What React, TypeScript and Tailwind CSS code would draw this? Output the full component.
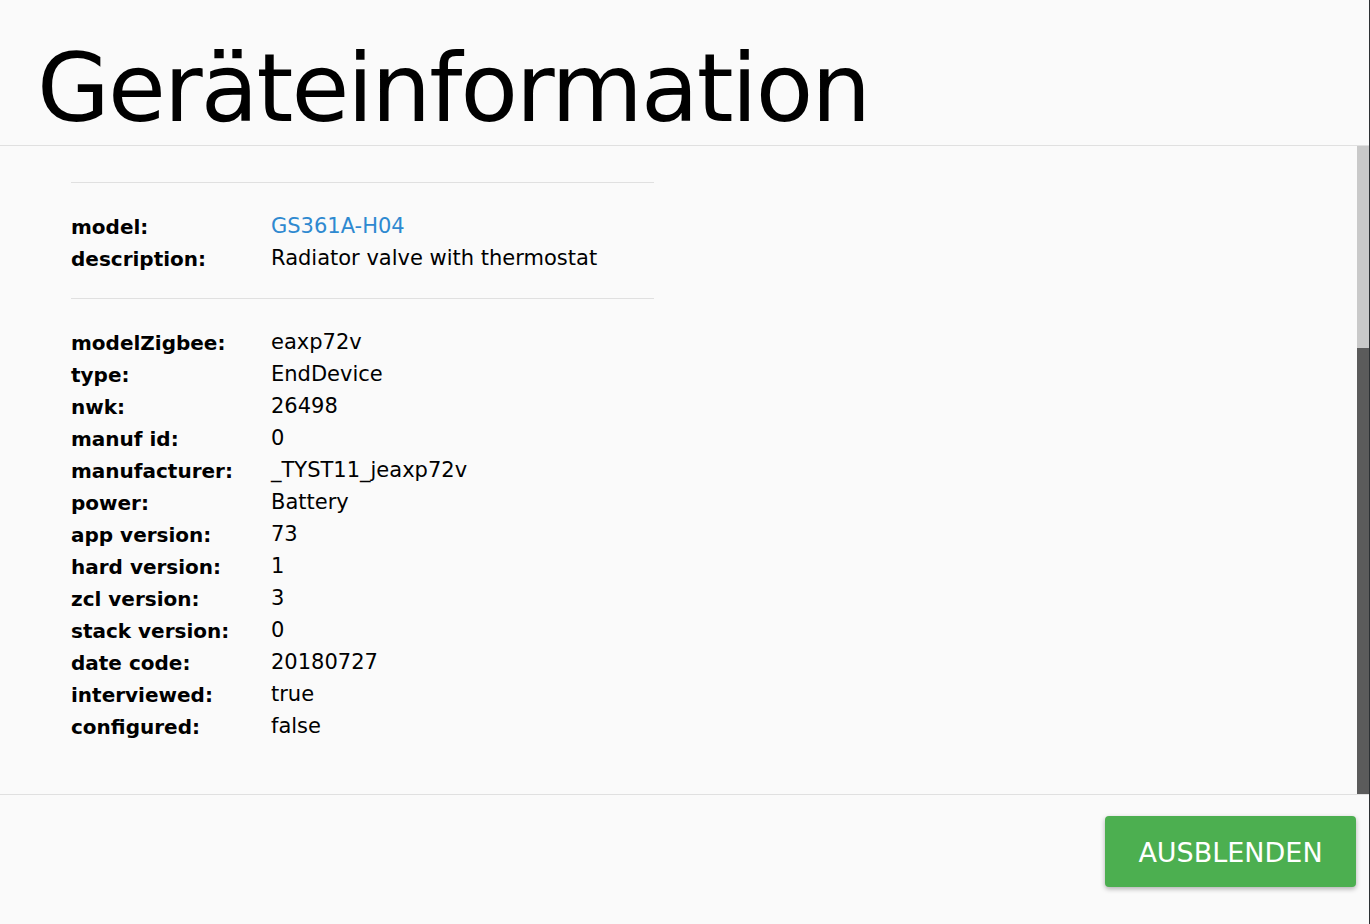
const rows: [string, string][] = [
  ["modelZigbee:", "eaxp72v"],
  ["type:", "EndDevice"],
  ["nwk:", "26498"],
  ["manuf id:", "0"],
  ["manufacturer:", "_TYST11_jeaxp72v"],
  ["power:", "Battery"],
  ["app version:", "73"],
  ["hard version:", "1"],
  ["zcl version:", "3"],
  ["stack version:", "0"],
  ["date code:", "20180727"],
  ["interviewed:", "true"],
  ["configured:", "false"],
];

function Row({ label, children }: { label: string; children: React.ReactNode }) {
  return (
    <div className="flex h-[32px] items-center">
      <span className="w-[200px] font-bold text-[20px] text-black">{label}</span>
      <span className="text-[21px] text-black">{children}</span>
    </div>
  );
}

export default function App() {
  return (
    <div
      className="flex flex-col w-[1370px] h-[924px] bg-[#fafafa] border-r border-[#2c3033] overflow-hidden"
      style={{ fontFamily: '"DejaVu Sans", "Liberation Sans", sans-serif' }}
    >
      {/* Title */}
      <div className="h-[146px] shrink-0 border-b border-[#e0e0e0] pl-[37px] pt-[42px]">
        <h1 className="text-[94px] leading-none tracking-[-0.02em] font-normal text-black">Geräteinformation</h1>
      </div>

      {/* Scrollable body */}
      <div className="flex h-[648px] shrink-0">
        <div className="flex-1 pl-[71px] pt-[36px]">
          <div className="w-[583px]">
            <div className="border-t border-[#e0e0e0] pt-[28px] pb-[23px]">
              <Row label="model:">
                <span className="text-[#2e89d0]">GS361A-H04</span>
              </Row>
              <Row label="description:">Radiator valve with thermostat</Row>
            </div>
            <div className="border-t border-[#e0e0e0] pt-[28px]">
              {rows.map(([k, v]) => (
                <Row key={k} label={k}>
                  {v}
                </Row>
              ))}
            </div>
          </div>
        </div>
        {/* scrollbar */}
        <div className="w-[12px] flex flex-col">
          <div className="h-[202px] bg-[#c9c9c9]" />
          <div className="flex-1 bg-[#5b5b5b]" />
        </div>
      </div>

      {/* Footer */}
      <div className="flex-1 border-t border-[#e0e0e0] flex justify-end items-start pt-[21px] pr-[13px]">
        <button className="h-[71px] w-[251px] pt-[3px] rounded-[4px] bg-[#4caf50] text-white text-[27px] shadow-[0_2px_5px_rgba(0,0,0,0.3)]">
          AUSBLENDEN
        </button>
      </div>
    </div>
  );
}
